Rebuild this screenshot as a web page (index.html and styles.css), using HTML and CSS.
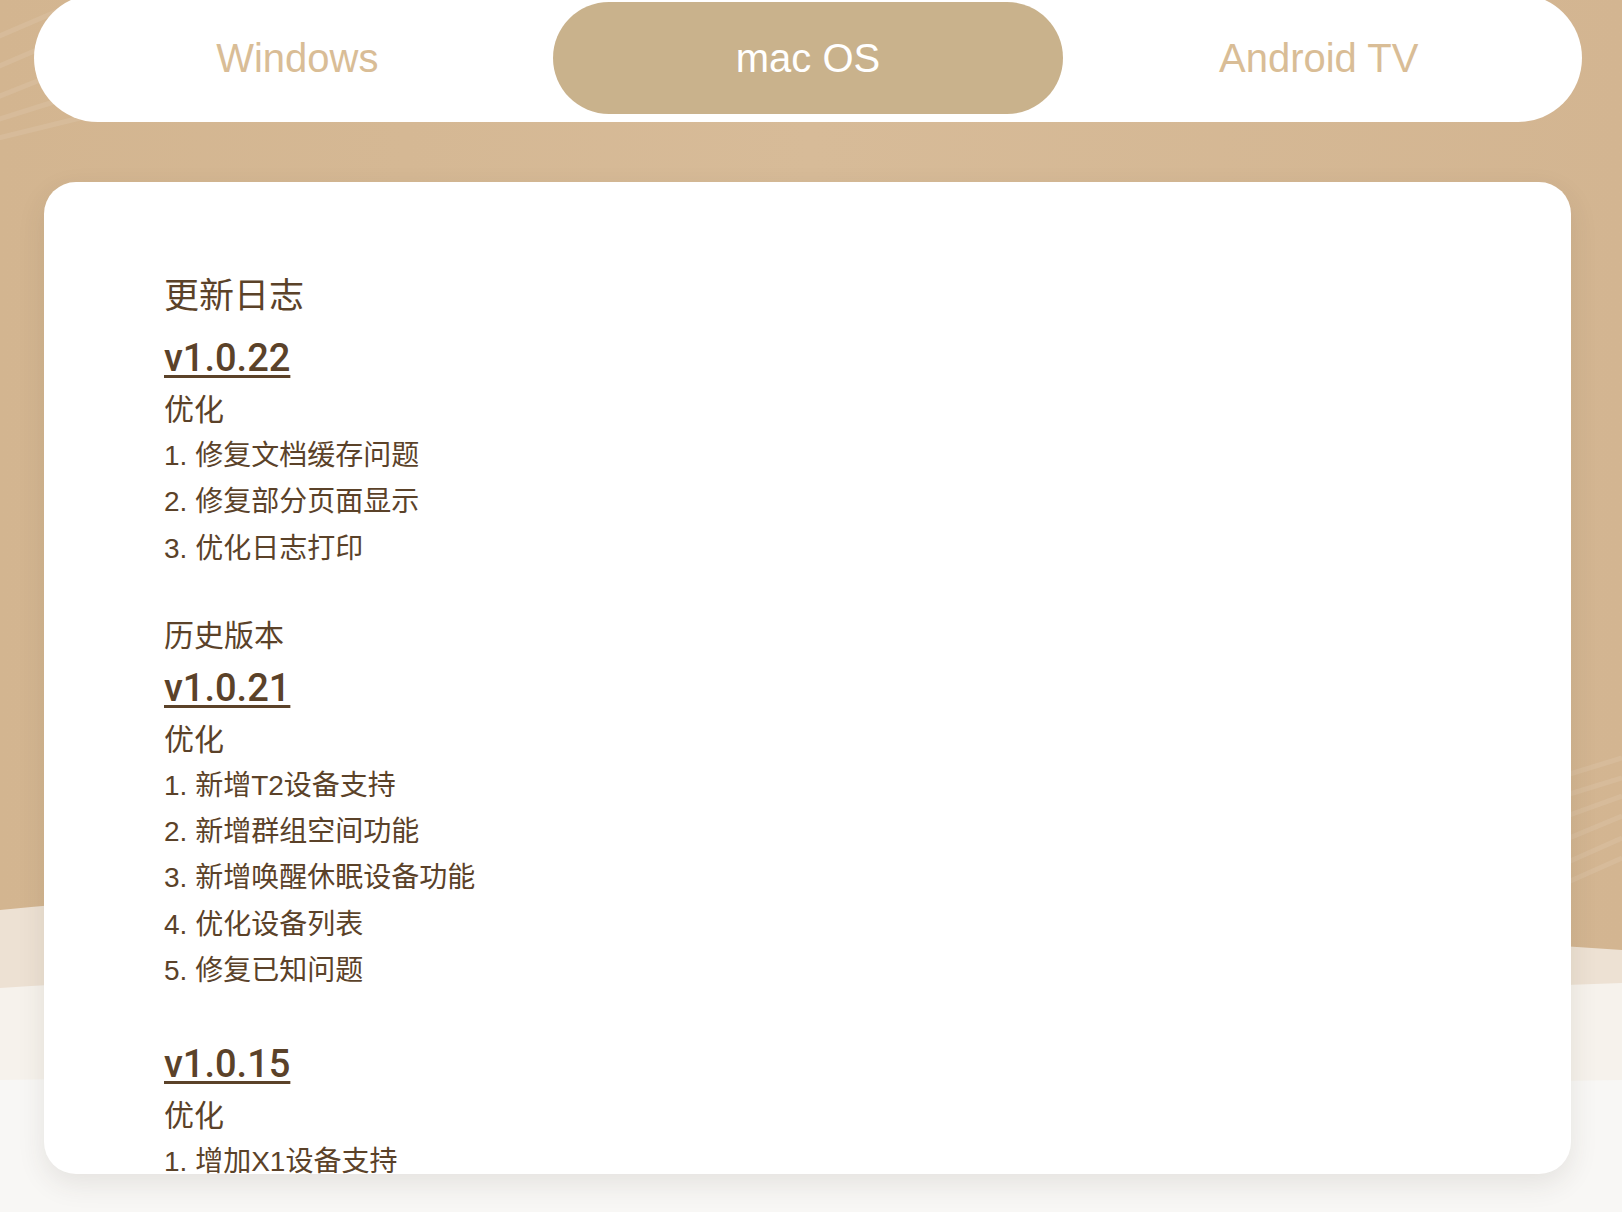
FILE: index.html
```html
<!DOCTYPE html>
<html lang="zh-CN">
<head>
    <meta charset="utf-8">
    <meta name="viewport" content="width=device-width, initial-scale=1.0">
    <title>更新日志</title>
    <link rel="stylesheet" href="styles.css">
</head>
<body>
    <svg class="backdrop" viewBox="0 0 1622 1212" preserveAspectRatio="none" aria-hidden="true">
        <defs>
            <linearGradient id="tan" x1="0" y1="0" x2="1" y2="0">
                <stop offset="0" stop-color="#d3b590"/>
                <stop offset="0.5" stop-color="#d7bb98"/>
                <stop offset="1" stop-color="#d3b591"/>
            </linearGradient>
        </defs>
        <rect width="1622" height="1212" fill="url(#tan)"/>
        <g stroke="#fff" stroke-opacity="0.09" stroke-width="5" fill="none">
            <path d="M-10 40 L60 10"/>
            <path d="M-10 70 L60 40"/>
            <path d="M-10 100 L60 72"/>
            <path d="M-10 122 L60 100"/>
            <path d="M-10 140 L80 118"/>
            <path d="M1550 780 L1622 758"/>
            <path d="M1550 800 L1622 778"/>
            <path d="M1550 822 L1622 796"/>
            <path d="M1550 846 L1622 816"/>
            <path d="M1550 870 L1622 838"/>
            <path d="M1550 890 L1622 858"/>
        </g>
        <path d="M0 910 C 500 860 1100 915 1622 950 L1622 1212 L0 1212 Z" fill="#ede1d3"/>
        <path d="M0 988 C 500 955 1100 1005 1622 983 L1622 1212 L0 1212 Z" fill="#f6f2ec"/>
        <path d="M0 1080 C 600 1070 1100 1090 1622 1080 L1622 1212 L0 1212 Z" fill="#f8f7f5"/>
    </svg>

    <div class="tabs">
        <div class="tab">Windows</div>
        <div class="tab active">mac OS</div>
        <div class="tab">Android TV</div>
    </div>

    <div class="card">
        <div class="log">
            <h2 class="log-title">更新日志</h2>
            <div class="release">
                <a class="ver" href="#">v1.0.22</a>
                <p class="kind">优化</p>
                <p class="item">1. 修复文档缓存问题</p>
                <p class="item">2. 修复部分页面显示</p>
                <p class="item">3. 优化日志打印</p>
            </div>

            <h3 class="log-sub">历史版本</h3>
            <div class="release">
                <a class="ver" href="#">v1.0.21</a>
                <p class="kind">优化</p>
                <p class="item">1. 新增T2设备支持</p>
                <p class="item">2. 新增群组空间功能</p>
                <p class="item">3. 新增唤醒休眠设备功能</p>
                <p class="item">4. 优化设备列表</p>
                <p class="item">5. 修复已知问题</p>
            </div>

            <div class="release">
                <a class="ver" href="#">v1.0.15</a>
                <p class="kind">优化</p>
                <p class="item">1. 增加X1设备支持</p>
            </div>
        </div>
    </div>
</body>
</html>
```

FILE: styles.css
```css
html, body {
    margin: 0;
    height: 1212px;
    overflow: hidden;
}
body {
    position: relative;
    font-family: "Liberation Sans", "Noto Sans CJK SC", sans-serif;
    color: #5b4229;
}
.backdrop {
    position: absolute;
    left: 0;
    top: 0;
    width: 100%;
    height: 100%;
    z-index: -1;
}
.tabs {
    display: grid;
    grid-template-columns: 1fr 1fr 1fr;
    margin: -6px 40px 0 34px;
    padding: 8px;
    background: #fff;
    border-radius: 65px;
}
.tab {
    height: 112px;
    border-radius: 56px;
    display: flex;
    align-items: center;
    justify-content: center;
    font-size: 40px;
    color: #d9bd96;
}
.tab.active {
    background: #c9b28c;
    color: #fff;
}
.card {
    margin: 60px 51px 0 44px;
    height: 992px;
    background: #fff;
    border-radius: 32px;
    box-shadow: 0 10px 28px rgba(60, 50, 40, 0.1);
    overflow: hidden;
}
.log {
    padding: 89px 120px 0;
}
.log-title {
    margin: 0 0 8px;
    font-size: 35px;
    font-weight: normal;
    line-height: 50px;
}
.log-sub {
    margin: 0;
    font-size: 30px;
    font-weight: normal;
    line-height: 46px;
}
.release {
    margin-bottom: 41px;
}
.ver {
    display: block;
    width: max-content;
    font-family: Roboto, "Liberation Sans", sans-serif;
    font-size: 38px;
    font-weight: 500;
    line-height: 58px;
    color: #5b4229;
    text-decoration: underline;
    text-decoration-thickness: 3px;
    text-underline-offset: 4px;
}
.kind {
    margin: 0;
    font-size: 30px;
    line-height: 46px;
}
.item {
    margin: 0;
    font-size: 28px;
    line-height: 46.3px;
}
```
